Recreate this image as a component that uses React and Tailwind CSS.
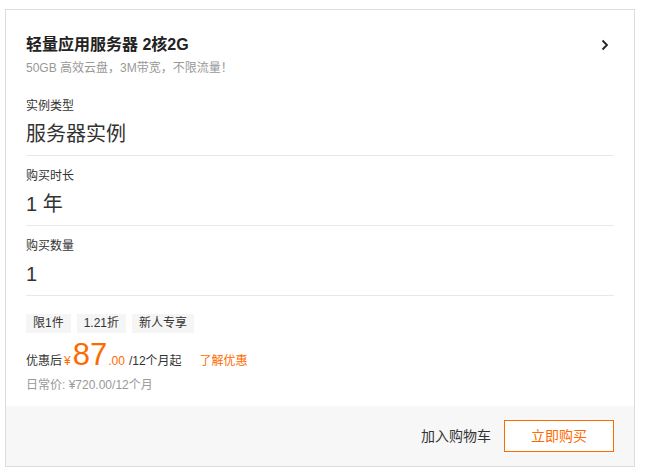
import React from "react";

const font = { fontFamily: '"Liberation Sans", "Noto Sans CJK SC", sans-serif' };

function Field({ label, value }) {
  return (
    <div className="border-b border-[#e8e8e8] pt-[11px] pb-[9px]">
      <div className="text-[12px] leading-[18px] text-[#333]">{label}</div>
      <div className="mt-[7px] text-[20px] leading-[24px] text-[#333]">{value}</div>
    </div>
  );
}

export default function App() {
  const tags = ["限1件", "1.21折", "新人专享"];
  return (
    <div className="bg-white w-[645px] h-[472px] pt-[9px] pl-[5px]" style={font}>
      <div className="w-[630px] h-[458px] border border-[#dcdcdc] flex flex-col">
        <div className="px-[20px] flex-1">
          <div className="pt-[25px] flex items-center justify-between">
            <div className="text-[16px] leading-[20px] font-bold text-[#222]">轻量应用服务器 2核2G</div>
            <svg width="8" height="12" viewBox="0 0 8 12" className="mr-[5px]">
              <path d="M1.5 1.5 L6 6 L1.5 10.5" fill="none" stroke="#222" strokeWidth="1.8" />
            </svg>
          </div>
          <div className="mt-[4px] text-[12px] leading-[18px] text-[#999]">50GB 高效云盘，3M带宽，不限流量！</div>
          <div className="mt-[9px]">
            <Field label="实例类型" value="服务器实例" />
            <Field label="购买时长" value="1 年" />
            <Field label="购买数量" value="1" />
          </div>
          <div className="mt-[18px] flex gap-[6px]">
            {tags.map((t) => (
              <span key={t} className="h-[19px] px-[7px] bg-[#f5f5f5] text-[12px] leading-[19px] text-[#333]">
                {t}
              </span>
            ))}
          </div>
          <div className="mt-[7px] flex items-baseline text-[12px] text-[#333] h-[30px]">
            <span>优惠后</span>
            <span className="ml-[2px] text-[#ff6a00]">¥</span>
            <span className="ml-[2px] text-[31px] leading-[30px] text-[#ff6a00]">87</span>
            <span className="ml-[1px] text-[#ff6a00]">.00</span>
            <span className="ml-[4px]">/12个月起</span>
            <span className="ml-[18px] text-[#ff6a00]">了解优惠</span>
          </div>
          <div className="mt-[6px] text-[12px] leading-[18px] text-[#999]">日常价: ¥720.00/12个月</div>
        </div>
        <div className="h-[60px] bg-[#f7f7f7] flex items-center justify-end pr-[20px]">
          <span className="text-[14px] text-[#333]">加入购物车</span>
          <button className="ml-[13px] w-[110px] h-[32px] border border-[#ff6a00] bg-white text-[14px] text-[#ff6a00]">
            立即购买
          </button>
        </div>
      </div>
    </div>
  );
}
